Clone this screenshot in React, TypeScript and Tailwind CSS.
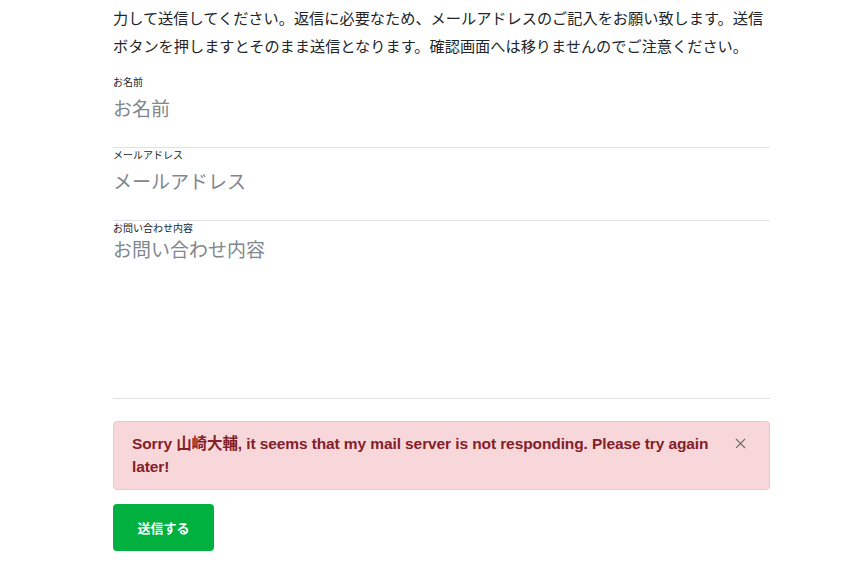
import { X } from 'lucide-react'

const jp = "font-['Noto_Sans_CJK_JP',sans-serif]"

const fields = [
  { label: 'お名前', placeholder: 'お名前', type: 'input' },
  { label: 'メールアドレス', placeholder: 'メールアドレス', type: 'input' },
  { label: 'お問い合わせ内容', placeholder: 'お問い合わせ内容', type: 'textarea' }
]

export default function App() {
  return (
    <div className={`min-h-[567px] bg-white ${jp}`}>
      <div className="ml-[113px] w-[657px] pt-[3px]">
        <div className="text-[15.2px] leading-[28px] text-[#212529]">
          <p className="whitespace-nowrap">力して送信してください。返信に必要なため、メールアドレスのご記入をお願い致します。送信</p>
          <p className="whitespace-nowrap">ボタンを押しますとそのまま送信となります。確認画面へは移りませんのでご注意ください。</p>
        </div>

        <form className="mt-[16px]">
          {fields.map((field) => (
            <div key={field.label} className="border-b border-[#dee2e6]">
              <label className="block text-[10px] leading-[14px] text-[#212529]">{field.label}</label>
              {field.type === 'input' ? (
                <input
                  placeholder={field.placeholder}
                  className="block h-[58px] w-full pb-[24px] pt-[2px] text-[19px] leading-[28px] outline-none placeholder:text-[#80878e]"
                />
              ) : (
                <textarea
                  placeholder={field.placeholder}
                  className="block h-[163px] w-full resize-none pt-[1px] text-[19px] leading-[26px] outline-none placeholder:text-[#80878e]"
                />
              )}
            </div>
          ))}

          <div className="mt-[22px] flex items-start justify-between rounded border border-[#f5c2c7] bg-[#f8d7da] pb-[11px] pl-[18px] pr-[20px] pt-[10px] text-[#842029]">
            <p className="w-[592px] font-['Liberation_Sans','Noto_Sans_CJK_JP',sans-serif] text-[15.5px] font-bold leading-[23px] tracking-[-0.1px]">
              Sorry 山崎大輔, it seems that my mail server is not responding. Please try again later!
            </p>
            <button type="button" className="mt-[3px] text-[#6c6c6c]">
              <X className="h-[17px] w-[17px]" strokeWidth={1.5} />
            </button>
          </div>

          <button
            type="button"
            className="mt-[14px] flex h-[47px] w-[101px] items-center justify-center rounded bg-[#00b140] text-[13px] font-bold text-white"
          >
            送信する
          </button>
        </form>
      </div>
    </div>
  )
}
